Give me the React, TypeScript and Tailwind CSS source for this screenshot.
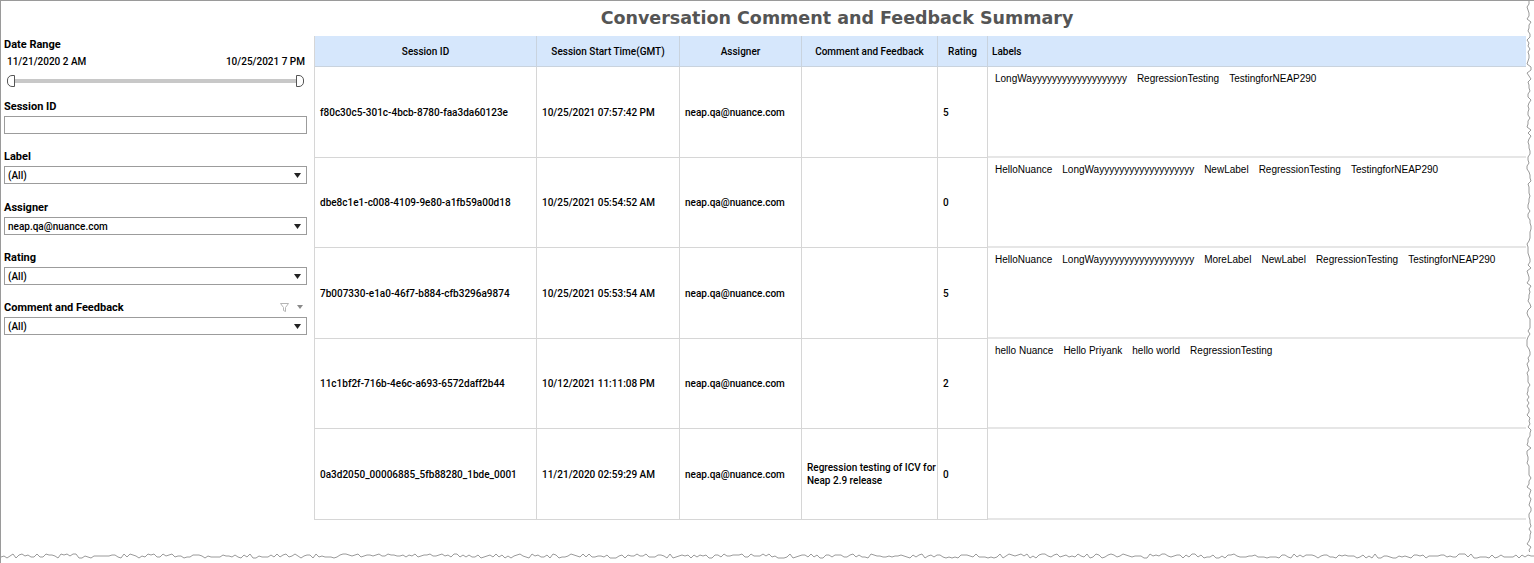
import React from 'react';

type Row = {
  id: string;
  start: string;
  assigner: string;
  comment: string;
  rating: string;
  labels: string[];
  h: string;
};

const rows: Row[] = [
  {
    id: 'f80c30c5-301c-4bcb-8780-faa3da60123e',
    start: '10/25/2021 07:57:42 PM',
    assigner: 'neap.qa@nuance.com',
    comment: '',
    rating: '5',
    labels: ['LongWayyyyyyyyyyyyyyyyyyy', 'RegressionTesting', 'TestingforNEAP290'],
    h: 'h-[91px]',
  },
  {
    id: 'dbe8c1e1-c008-4109-9e80-a1fb59a00d18',
    start: '10/25/2021 05:54:52 AM',
    assigner: 'neap.qa@nuance.com',
    comment: '',
    rating: '0',
    labels: ['HelloNuance', 'LongWayyyyyyyyyyyyyyyyyyy', 'NewLabel', 'RegressionTesting', 'TestingforNEAP290'],
    h: 'h-[90px]',
  },
  {
    id: '7b007330-e1a0-46f7-b884-cfb3296a9874',
    start: '10/25/2021 05:53:54 AM',
    assigner: 'neap.qa@nuance.com',
    comment: '',
    rating: '5',
    labels: ['HelloNuance', 'LongWayyyyyyyyyyyyyyyyyyy', 'MoreLabel', 'NewLabel', 'RegressionTesting', 'TestingforNEAP290'],
    h: 'h-[91px]',
  },
  {
    id: '11c1bf2f-716b-4e6c-a693-6572daff2b44',
    start: '10/12/2021 11:11:08 PM',
    assigner: 'neap.qa@nuance.com',
    comment: '',
    rating: '2',
    labels: ['hello Nuance', 'Hello Priyank', 'hello world', 'RegressionTesting'],
    h: 'h-[90px]',
  },
  {
    id: '0a3d2050_00006885_5fb88280_1bde_0001',
    start: '11/21/2020 02:59:29 AM',
    assigner: 'neap.qa@nuance.com',
    comment: 'Regression testing of ICV for Neap 2.9 release',
    rating: '0',
    labels: [],
    h: 'h-[91px]',
  },
];

function Caret() {
  return (
    <svg width="7" height="5" viewBox="0 0 7 5" className="shrink-0">
      <path d="M0 0 H7 L3.5 5 Z" fill="#222" />
    </svg>
  );
}

function SelectBox({ value }: { value: string }) {
  return (
    <div className="h-[18px] border border-[#9c9c9c] bg-white flex items-center justify-between pl-[3px] pr-[5px] text-[10px] font-medium text-black">
      <span>{value}</span>
      <Caret />
    </div>
  );
}

function FilterLabel({ children }: { children: React.ReactNode }) {
  return <div className="text-[11px] font-bold text-black leading-[14px] mb-[2px]">{children}</div>;
}

// torn-paper edge along the right and bottom of the capture
function jag(count: number, seed: number) {
  const out: number[] = [];
  let s = seed;
  for (let i = 0; i < count; i++) {
    s = (s * 9301 + 49297) % 233280;
    out.push(s / 233280);
  }
  return out;
}

function TornEdges() {
  const rv = jag(190, 7);
  const bv = jag(520, 13);
  const right = rv.map((v, i) => `${1 + Math.round(v * 4)},${i * 3}`).join(' ');
  const bottom = bv.map((v, i) => `${i * 3},${2 + Math.round(v * 4)}`).join(' ');
  return (
    <>
      <svg className="absolute top-0 left-[1525px]" width="9" height="556">
        <rect x="0" y="0" width="9" height="556" fill="white" />
        <polyline points={right} fill="none" stroke="#9a9a9a" strokeWidth="1" />
      </svg>
      <svg className="absolute left-0 top-[551px]" width="1534" height="12">
        <rect x="0" y="0" width="1534" height="12" fill="white" />
        <polyline points={bottom} fill="none" stroke="#9a9a9a" strokeWidth="1" />
      </svg>
    </>
  );
}

export default function App() {
  const cell = 'border-r border-b border-[#d6d6d6] flex items-center pl-[5px]';
  const head = 'border-r border-b border-[#c9d3de] flex items-center justify-center text-center';

  return (
    <div
      className="relative w-[1534px] h-[563px] bg-white overflow-hidden border-t border-l border-[#9a9a9a]"
      style={{ fontFamily: 'Roboto, "Liberation Sans", sans-serif' }}
    >
      {/* Title */}
      <div className="h-[35px] flex items-center justify-center pl-[145px] pr-[6px]">
        <h1
          className="text-[17.5px] font-bold text-[#555555]"
          style={{ fontFamily: '"DejaVu Sans", Verdana, sans-serif' }}
        >
          Conversation Comment and Feedback Summary
        </h1>
      </div>

      <div className="flex">
        {/* Filters */}
        <div className="w-[313px] pl-[3px] pr-[7px] pt-[2px]">
          <FilterLabel>Date Range</FilterLabel>
          <div className="flex justify-between px-[3px] pr-[2px] text-[10px] font-medium text-black leading-[14px] mt-[3px]">
            <span>11/21/2020 2 AM</span>
            <span>10/25/2021 7 PM</span>
          </div>
          <div className="relative h-[14px] mt-[5px] mx-[3px]">
            <div className="absolute left-[4px] right-[4px] top-[5px] h-[4px] bg-[#c8c8c8]" />
            <div className="absolute left-0 top-[1px] w-[8px] h-[12px] bg-white border border-[#555] rounded-l-[5px]" />
            <div className="absolute right-0 top-[1px] w-[8px] h-[12px] bg-white border border-[#555] rounded-r-[5px]" />
          </div>

          <div className="mt-[12px]">
            <FilterLabel>Session ID</FilterLabel>
            <div className="h-[18px] border border-[#9c9c9c] bg-white" />
          </div>

          <div className="mt-[16px]">
            <FilterLabel>Label</FilterLabel>
            <SelectBox value="(All)" />
          </div>

          <div className="mt-[17px]">
            <FilterLabel>Assigner</FilterLabel>
            <SelectBox value="neap.qa@nuance.com" />
          </div>

          <div className="mt-[16px]">
            <FilterLabel>Rating</FilterLabel>
            <SelectBox value="(All)" />
          </div>

          <div className="mt-[16px]">
            <div className="flex items-center justify-between">
              <FilterLabel>Comment and Feedback</FilterLabel>
              <div className="flex items-center gap-[8px] pr-[4px] -mt-[4px]">
                <svg width="9" height="9" viewBox="0 0 9 9">
                  <path d="M0.5 0.5 H8.5 L5.5 4.5 V8.5 L3.5 7.5 V4.5 Z" fill="none" stroke="#b5b5b5" strokeWidth="1" />
                </svg>
                <svg width="6" height="4" viewBox="0 0 6 4">
                  <path d="M0 0 H6 L3 4 Z" fill="#8a8a8a" />
                </svg>
              </div>
            </div>
            <SelectBox value="(All)" />
          </div>
        </div>

        {/* Table */}
        <div className="grid grid-cols-[222px_143px_122px_136px_50px_540px] border-l border-[#d6d6d6] text-[10px] font-medium text-black leading-[13px]">
          <div className={`${head} h-[31px] bg-[#d6e7fc]`}>Session ID</div>
          <div className={`${head} bg-[#d6e7fc]`}>Session Start Time(GMT)</div>
          <div className={`${head} bg-[#d6e7fc]`}>Assigner</div>
          <div className={`${head} bg-[#d6e7fc]`}>Comment and Feedback</div>
          <div className={`${head} bg-[#d6e7fc]`}>Rating</div>
          <div className="border-b border-[#c9d3de] bg-[#d6e7fc] flex items-center pl-[4px]">Labels</div>

          {rows.map((r) => (
            <React.Fragment key={r.id}>
              <div className={`${cell} ${r.h}`}>{r.id}</div>
              <div className={cell}>{r.start}</div>
              <div className={cell}>{r.assigner}</div>
              <div className={cell}>{r.comment}</div>
              <div className={cell}>{r.rating}</div>
              <div className="border-b-2 border-[#e6e6e6] pt-[5px] pl-[7px] flex flex-wrap content-start gap-x-[10px]">
                {r.labels.map((l) => (
                  <span key={l} style={{ fontFamily: '"Liberation Sans", sans-serif' }}>
                    {l}
                  </span>
                ))}
              </div>
            </React.Fragment>
          ))}
        </div>
      </div>

      <TornEdges />
    </div>
  );
}
